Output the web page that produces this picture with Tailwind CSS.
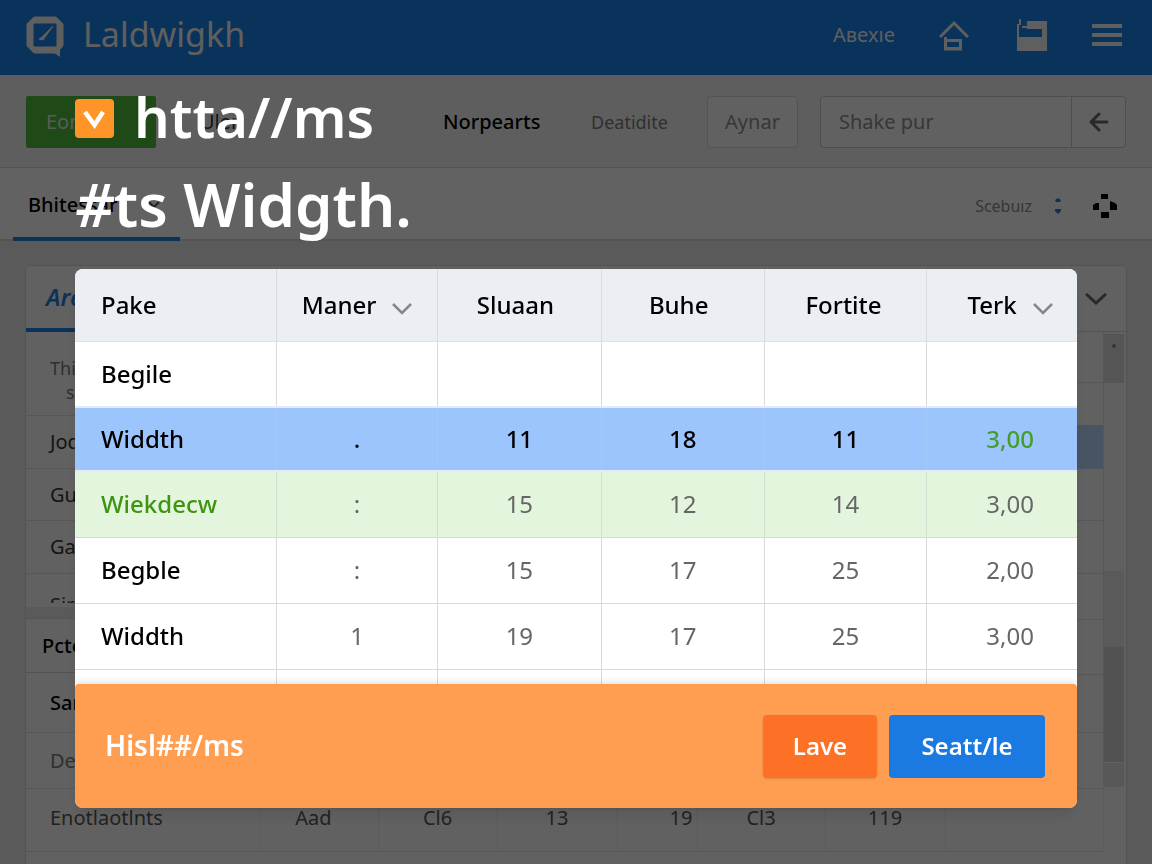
<!DOCTYPE html>
<html lang="en">
<head>
    <meta charset="utf-8">
    <meta name="viewport" content="width=device-width, initial-scale=1">
    <title>Laldwigkh</title>
    <script src="https://cdn.jsdelivr.net/npm/@tailwindcss/browser@4"></script>
</head>
<body class="h-screen overflow-hidden bg-[#e2e2e1] font-['Noto_Sans',sans-serif] text-xl text-black">

    <!-- Page -->
    <header class="flex h-[75px] items-center bg-[#1780e1] px-[26px] pb-1.5 text-[#eeeeee]">
        <svg class="mt-1 h-[42px] w-[38px]" viewBox="0 0 38 42" fill="none" stroke="currentColor">
            <path d="M9 3h20l6 6v20l-5 6H9l-6-6V9z" stroke-width="5" stroke-linejoin="round"/>
            <path d="M6 6h26v26H6z" stroke-width="3"/>
            <path d="M24 34l10 7V30z" fill="currentColor" stroke="none"/>
            <path d="M13 23l4 1L27 10l-11 11z" fill="currentColor" stroke-width="1" stroke-linejoin="round"/>
        </svg>
        <span class="ml-[19px] text-[34px]">Laldwigkh</span>
        <nav class="ml-auto flex items-center">
            <a href="#" class="mr-11">Aвexıe</a>
            <a href="#" aria-label="Home" class="mr-12">
                <svg class="h-8 w-[30px]" viewBox="0 0 30 32" fill="none" stroke="currentColor" stroke-width="3">
                    <path d="M1 18L15 4l14 14"/>
                    <path d="M6.500 18v12h15V21.500H8"/>
                    <path d="M7 29.500h15"/>
                </svg>
            </a>
            <button type="button" aria-label="Save" class="mr-[45px]">
                <svg class="h-8 w-[30px]" viewBox="0 0 30 32" fill="currentColor">
                    <path d="M0 5h2v13h23V9h2V2h3v30H0z"/>
                    <path d="M2 0h2v6H2zM10 2h17v8H10zM5 7h5v2H5z"/>
                </svg>
            </button>
            <button type="button" aria-label="Menu" class="mr-1">
                <svg class="h-6 w-[30px]" viewBox="0 0 30 24" fill="currentColor">
                    <path d="M0 1h30v4H0zM0 10h30v4H0zM0 19h30v4H0z"/>
                </svg>
            </button>
        </nav>
    </header>

    <div class="flex h-[93px] items-center border-b border-[#cfcfcf] bg-[#ebebeb] px-[26px] pt-0.5">
        <button type="button" class="h-[52px] w-[130px] rounded-xs bg-[#4eb93a] pl-5 text-left text-[#d8e8d4]">Eoncis.</button>
        <a href="#" class="ml-11 w-[243px] text-[#333]">Uler</a>
        <a href="#" class="w-[148px] font-medium">Norpearts</a>
        <a href="#" class="w-[116px] text-lg text-[#777]">Deatidite</a>
        <button type="button" class="h-[52px] w-[91px] rounded border border-[#cfcfcf] bg-[#f3f3f3] text-[#8a8a8a]">Aynar</button>
        <form class="ml-[22px] flex h-[52px] flex-1 overflow-hidden rounded border border-[#c4c4c4] bg-[#f3f3f3]">
            <input type="text" aria-label="Search" placeholder="Shake pur" class="w-0 flex-1 px-[18px] placeholder:text-[#8a8a8a]">
            <button type="button" aria-label="Back" class="flex w-[54px] items-center justify-center border-l border-[#c4c4c4] text-[#666]">
                <svg class="h-5 w-5" viewBox="0 0 20 20" fill="none" stroke="currentColor" stroke-width="3" stroke-linecap="round" stroke-linejoin="round">
                    <path d="M18 10H2M10 2l-8 8 8 8"/>
                </svg>
            </button>
        </form>
    </div>

    <div class="flex h-[73px] items-center border-b-2 border-[#cfcfcf] bg-[#f5f5f5] pr-[34px] pl-[13px]">
        <a href="#" class="-mb-0.5 flex h-[73px] w-[167px] items-center border-b-4 border-[#1f7be0] pt-1 pl-[15px] font-medium">
            Bhitessar
            <svg class="ml-auto mr-5 h-2 w-3" viewBox="0 0 12 8" fill="none" stroke="#555" stroke-width="2"><path d="M1 1l5 5 5-5"/></svg>
        </a>
        <label for="scale" class="mt-1 ml-auto text-base text-[#888]">Scebuız</label>
        <button id="scale" type="button" class="mt-1 ml-5">
            <svg class="h-5 w-3" viewBox="0 0 12 20" fill="#1f7be0">
                <path d="M6 2l3 2-1 2H4L3 4zM3 13h6v2l-3 3-3-3z"/>
            </svg>
        </button>
        <button type="button" aria-label="Move" class="mt-1 ml-7">
            <svg class="h-[26px] w-[26px]" viewBox="0 0 26 26">
                <path d="M9 1h7v5H9zM9 19h8v6H9zM1 12l3-2h3v7H1zM18 8l5 2 2 2v5h-7z"/>
            </svg>
        </button>
    </div>

    <main class="mx-[25px] mt-6 min-h-[600px] rounded-t-sm border border-[#d0d0d0] bg-[#f3f3f3]">
        <div class="flex h-[66px] items-center justify-between border-b border-[#cfcfcf] pr-[19px]">
            <a href="#" class="flex h-[66px] w-[120px] items-center border-b-4 border-[#1f7be0] pl-5 text-2xl font-semibold text-[#1f7be0] italic">Arep</a>
            <button type="button" aria-label="Expand" class="text-[#666]">
                <svg class="h-3 w-[22px]" viewBox="0 0 22 12" fill="none" stroke="currentColor" stroke-width="3"><path d="M1 1l10 9L21 1"/></svg>
            </button>
        </div>
        <div class="flex">
            <div class="w-[250px]">
                <div class="h-[84px] border-b border-[#d9d9d9] pt-6 pl-6 text-lg leading-6 text-[#777]">Thir<br><span class="pl-4">sone</span></div>
                <div class="flex h-[53px] items-center border-b border-[#d9d9d9] pl-6 text-[#333]">Jode</div>
                <div class="flex h-[52px] items-center border-b border-[#d9d9d9] pl-6 text-[#333]">Gut</div>
                <div class="flex h-[53px] items-center border-b border-[#d9d9d9] pl-6 text-[#333]">Gare</div>
                <div class="h-[33px] overflow-hidden pt-[21px] pl-6 text-[#444]"><div class="h-2 overflow-hidden leading-5">Sirt</div></div>
                <div class="h-3 border-b border-[#d0d0d0] bg-[#e2e2e1]"></div>
                <div class="flex h-[54px] items-center border-b border-[#cfcfcf] pl-4 font-medium">Pcter</div>
                <div class="flex h-[60px] items-center border-b border-[#d9d9d9] pl-6 font-medium">Sarı</div>
                <div class="flex h-14 items-center border-b border-[#d9d9d9] pl-6 text-[#777]">Deta</div>
            </div>
            <div class="flex-1 border-r border-[#dddddd]">
                <div class="h-[51px] border-b border-[#d9d9d9]"></div>
                <div class="mt-[42px] h-11 bg-[#b7d2f6]"></div>
                <div class="h-[52px] border-b border-[#d9d9d9]"></div>
                <div class="h-[53px] border-b border-[#d9d9d9]"></div>
                <div class="h-[46px] border-b border-[#d9d9d9]"></div>
                <div class="h-[55px] border-b border-[#d9d9d9]"></div>
                <div class="h-[58px] border-b border-[#d9d9d9]"></div>
                <div class="h-14 border-b border-[#d9d9d9]"></div>
            </div>
            <div class="w-[22px] pr-0.5">
                <div class="mt-0.5 flex h-[49px] justify-center bg-[#d4d4d4] pt-2.5"><span class="size-1 rounded-full bg-[#888]"></span></div>
                <div class="h-[188px] bg-[#efefef]"></div>
                <div class="h-[76px] bg-[#e2e2e2]"></div>
                <div class="h-[115px] bg-[#cecece]"></div>
                <div class="mt-px h-6 bg-[#dddddd]"></div>
            </div>
        </div>
        <table class="w-[98%] table-fixed text-center text-[#555]">
            <tr class="h-[62px] border-b border-[#d9d9d9]">
                <td class="w-[233px] border-r border-[#e4e4e4] pb-1 pl-6 text-left">Enotlaotlnts</td>
                <td class="w-[119px] border-r border-[#e4e4e4] pr-2.5 pb-1">Aad</td>
                <td class="w-[119px] border-r border-[#e4e4e4] pb-1">Cl6</td>
                <td class="w-[120px] border-r border-[#e4e4e4] pb-1">13</td>
                <td class="w-[80px] border-r border-[#e4e4e4] pr-1 pb-1 text-right">19</td>
                <td class="w-[128px] border-r border-[#e4e4e4] pb-1">Cl3</td>
                <td class="w-[120px] border-r border-[#e4e4e4] pb-1">119</td>
                <td class="border-r border-[#e4e4e4]"></td>
            </tr>
        </table>
    </main>

    <!-- Overlay -->
    <div class="fixed inset-0 bg-black/60 px-[75px] pt-[72px]">
        <h1 class="text-[60px] leading-[88px] font-semibold text-white">
            <span class="flex items-center gap-5">
                <svg class="mt-1 h-[39px] w-[39px]" viewBox="0 0 39 39" fill="none">
                    <rect width="39" height="39" rx="4" fill="#ff9429"/>
                    <path d="M10 13l9.500 13L28 13" stroke="#fff" stroke-width="4.500"/>
                </svg>
                <span class="text-[56px]">htta//ms</span>
            </span>
            <span class="block"><span class="italic">#</span>ts Widgth.</span>
        </h1>

        <div role="dialog" aria-label="Widgth" class="mt-[21px] overflow-hidden rounded-lg bg-white shadow-lg">
            <div class="h-[415px] overflow-hidden">
                <table class="w-full table-fixed text-center text-2xl text-[#666]">
                    <thead class="bg-[#ebeef3] text-black">
                        <tr class="h-[72px] border-b border-[#dfe1e4]">
                            <th class="w-[20.1%] border-r border-[#d9dbdf] pl-[26px] text-left font-medium">Pake</th>
                            <th class="w-[16.1%] border-r border-[#d9dbdf] font-medium">
                                <span class="flex items-center justify-center gap-4">Maner
                                    <svg class="mt-2 h-3 w-5" viewBox="0 0 20 12" fill="none" stroke="#85878b" stroke-width="2.500"><path d="M1 1l9 9 9-9"/></svg>
                                </span>
                            </th>
                            <th class="w-[16.3%] border-r border-[#d9dbdf] pr-2 font-medium">Sluaan</th>
                            <th class="w-[16.3%] border-r border-[#d9dbdf] pr-2 font-medium">Buhe</th>
                            <th class="w-[16.2%] border-r border-[#d9dbdf] pr-1 font-medium">Fortite</th>
                            <th class="w-[15%] font-medium">
                                <span class="flex items-center justify-center gap-4 pl-4">Terk
                                    <svg class="mt-2 h-3 w-5" viewBox="0 0 20 12" fill="none" stroke="#85878b" stroke-width="2.500"><path d="M1 1l9 9 9-9"/></svg>
                                </span>
                            </th>
                        </tr>
                    </thead>
                    <tbody>
                        <tr class="h-[66px] border-b border-[#d9d9d9]">
                            <td class="border-r border-[#d9d9d9] pl-[26px] text-left font-medium text-black">Begile</td>
                            <td class="border-r border-[#d9d9d9]"></td>
                            <td class="border-r border-[#d9d9d9]"></td>
                            <td class="border-r border-[#d9d9d9]"></td>
                            <td class="border-r border-[#d9d9d9]"></td>
                            <td></td>
                        </tr>
                        <tr class="h-16 border-y-2 border-[#e3ebf6] bg-[#9dc5fd] font-medium text-black">
                            <td class="border-r border-[#a3c8fa] pl-[26px] text-left">Widdth</td>
                            <td class="border-r border-[#a3c8fa]">.</td>
                            <td class="border-r border-[#a3c8fa]">11</td>
                            <td class="border-r border-[#a3c8fa]">18</td>
                            <td class="border-r border-[#a3c8fa]">11</td>
                            <td class="pl-4 text-[#449e2e]">3,00</td>
                        </tr>
                        <tr class="h-[66px] border-b border-[#d3d9d0] bg-[#e3f6dd]">
                            <td class="border-r border-[#d3dfd0] pl-[26px] text-left font-medium text-[#3f9412]">Wiekdecw</td>
                            <td class="border-r border-[#d3dfd0]">:</td>
                            <td class="border-r border-[#d3dfd0]">15</td>
                            <td class="border-r border-[#d3dfd0]">12</td>
                            <td class="border-r border-[#d3dfd0]">14</td>
                            <td class="pl-4">3,00</td>
                        </tr>
                        <tr class="h-[66px] border-b border-[#d9d9d9]">
                            <td class="border-r border-[#d9d9d9] pl-[26px] text-left font-medium text-black">Begble</td>
                            <td class="border-r border-[#d9d9d9]">:</td>
                            <td class="border-r border-[#d9d9d9]">15</td>
                            <td class="border-r border-[#d9d9d9]">17</td>
                            <td class="border-r border-[#d9d9d9]">25</td>
                            <td class="pl-4">2,00</td>
                        </tr>
                        <tr class="h-[66px] border-b border-[#d9d9d9]">
                            <td class="border-r border-[#d9d9d9] pl-[26px] text-left font-medium text-black">Widdth</td>
                            <td class="border-r border-[#d9d9d9]">1</td>
                            <td class="border-r border-[#d9d9d9]">19</td>
                            <td class="border-r border-[#d9d9d9]">17</td>
                            <td class="border-r border-[#d9d9d9]">25</td>
                            <td class="pl-4">3,00</td>
                        </tr>
                        <tr class="h-[66px]">
                            <td class="border-r border-[#d9d9d9]"></td>
                            <td class="border-r border-[#d9d9d9]"></td>
                            <td class="border-r border-[#d9d9d9]"></td>
                            <td class="border-r border-[#d9d9d9]"></td>
                            <td class="border-r border-[#d9d9d9]"></td>
                            <td></td>
                        </tr>
                    </tbody>
                </table>
            </div>
            <div class="flex h-[124px] items-center gap-3 rounded-t bg-[#ff9d50] pr-8 pl-[30px] text-2xl text-white shadow-[0_-2px_6px_rgba(0,0,0,0.12)]">
                <span class="mr-auto text-[28px] font-semibold">Hisl##/ms</span>
                <button type="button" class="h-[63px] w-[114px] rounded bg-[#fc7126] font-semibold shadow-sm">Lave</button>
                <button type="button" class="h-[63px] w-[156px] rounded bg-[#1a7ae2] font-semibold">Seatt/le</button>
            </div>
        </div>
    </div>
</body>
</html>
